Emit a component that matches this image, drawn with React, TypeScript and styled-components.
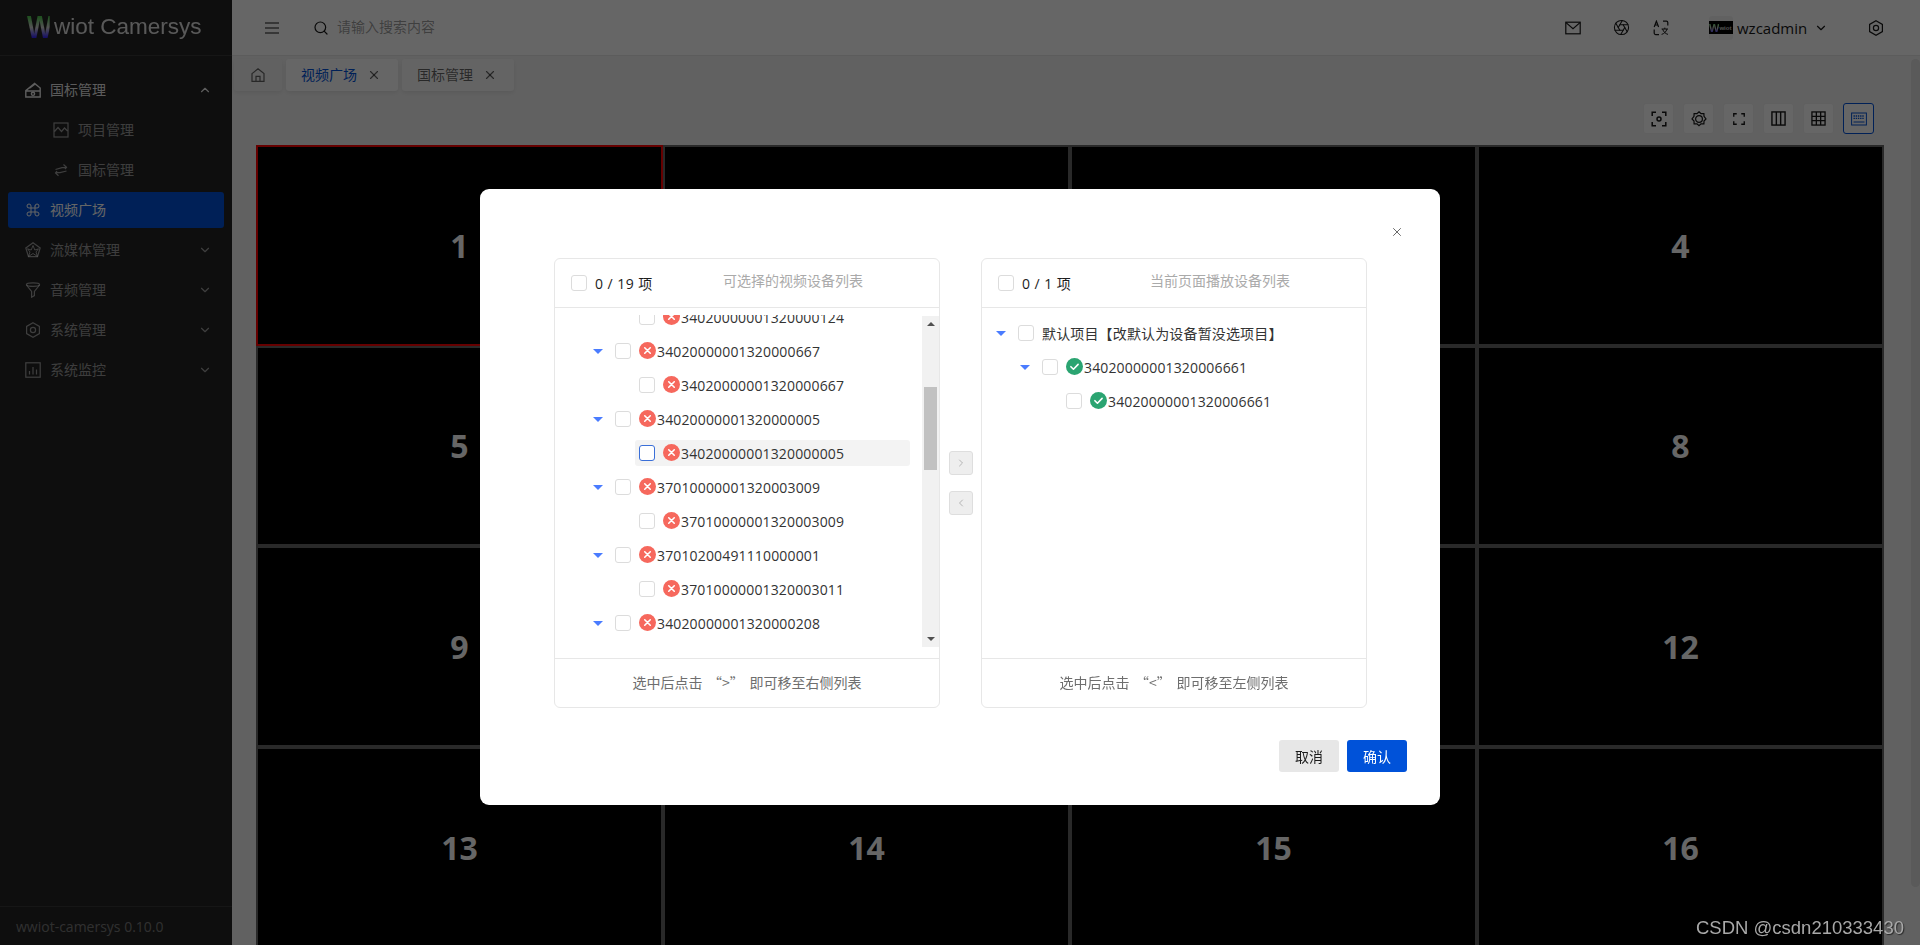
import * as React from "react";
import styled, { createGlobalStyle } from "styled-components";
import { Aperture, ChevronDown, ChevronLeft, ChevronRight, ChevronUp, Command, Search, X } from "lucide-react";

const GlobalStyle = createGlobalStyle`
  html, body {
    margin: 0;
    padding: 0;
    height: 100%;
    overflow: hidden;
    background: #f3f3f3;
  }
  * {
    box-sizing: border-box;
  }
  body {
    font-family: "Open Sans", "Noto Sans CJK SC", sans-serif;
    font-size: 14px;
  }
`;

const Page = styled.div`
  display: flex;
  width: 100vw;
  height: 100vh;
  overflow: hidden;
`;

/* ---------- sidebar ---------- */

const Sidebar = styled.aside`
  flex: 0 0 232px;
  display: flex;
  flex-direction: column;
  background: #242424;
  color: rgba(255, 255, 255, 0.55);
`;

const Logo = styled.div`
  flex: 0 0 56px;
  display: flex;
  align-items: center;
  padding: 0 0 2px 27px;
  border-bottom: 1px solid #383838;
`;

const LogoMark = styled.span`
  display: inline-block;
  flex: 0 0 27px;
  font-family: "Liberation Sans", sans-serif;
  font-weight: 700;
  font-size: 32px;
  line-height: 30px;
  width: 27px;
  transform: scaleX(0.84);
  transform-origin: left center;
  background: linear-gradient(180deg, #45c845 12%, #d0d0d0 52%, #2a18ff 88%);
  -webkit-background-clip: text;
  background-clip: text;
  color: transparent;
`;

const LogoText = styled.span`
  font-family: "Liberation Sans", sans-serif;
  font-size: 22.5px;
  white-space: nowrap;
  color: #fff;
  opacity: 0.85;
`;

const Menu = styled.nav`
  flex: 1;
  display: flex;
  flex-direction: column;
  gap: 4px;
  padding: 16px 8px 0;
`;

const MenuItem = styled.div<{ $active?: boolean; $open?: boolean; $sub?: boolean }>`
  height: 36px;
  display: flex;
  align-items: center;
  gap: 9px;
  padding: 0 12px 0 ${(p) => (p.$sub ? "45px" : "17px")};
  border-radius: 3px;
  background: ${(p) => (p.$active ? "#0052d9" : "transparent")};
  color: ${(p) => (p.$active ? "#fff" : p.$open ? "rgba(255,255,255,.9)" : "rgba(255,255,255,.55)")};
  line-height: 22px;
`;

const MenuLabel = styled.span`
  flex: 1;
`;

const VersionBar = styled.div`
  flex: 0 0 39px;
  display: flex;
  align-items: center;
  padding-left: 16px;
  border-top: 1px solid #383838;
  color: rgba(255, 255, 255, 0.4);
`;

/* ---------- header and tabs ---------- */

const Main = styled.div`
  flex: 1;
  min-width: 0;
  display: flex;
  flex-direction: column;
  position: relative;
`;

const Header = styled.header`
  flex: 0 0 56px;
  display: flex;
  align-items: center;
  padding: 0 24px 0 32px;
  background: #fff;
  border-bottom: 1px solid #e7e7e7;
  color: #181818;
`;

const SearchBox = styled.div`
  flex: 1;
  display: flex;
  align-items: center;
  gap: 8px;
  margin-left: 33px;
  color: rgba(0, 0, 0, 0.4);
  line-height: 20px;
  svg {
    color: #181818;
  }
`;

const SearchText = styled.span`
  margin-top: -2px;
`;

const HeadButton = styled.div<{ $ml?: number }>`
  width: 40px;
  height: 32px;
  display: flex;
  align-items: center;
  justify-content: center;
  margin-left: ${(p) => p.$ml ?? 0}px;
`;

const UserBox = styled.div`
  display: flex;
  align-items: center;
  width: 127px;
  margin: 0 20px 0 28px;
`;

const AvatarFrame = styled.div`
  width: 24px;
  height: 24px;
  display: flex;
  align-items: center;
  border-radius: 3px;
  background: #f3f3f3;
`;

const AvatarImage = styled.div`
  width: 24px;
  height: 13px;
  display: flex;
  align-items: center;
  background: #000;
  color: #ccc;
  font-family: "Liberation Sans", sans-serif;
  font-size: 6px;
  font-weight: 700;
  overflow: hidden;
`;

const AvatarW = styled.span`
  font-size: 11px;
  background: linear-gradient(180deg, #45c845, #d0d0d0 50%, #2a18ff);
  -webkit-background-clip: text;
  background-clip: text;
  color: transparent;
`;

const UserName = styled.span`
  margin: 0 7px 0 4px;
  font-size: 15px;
`;

const TabBar = styled.div`
  flex: 0 0 40px;
  display: flex;
  gap: 4px;
  padding: 3px 0 0 2px;
`;

const Tab = styled.div<{ $active?: boolean; $home?: boolean }>`
  width: ${(p) => (p.$home ? "48px" : "112px")};
  height: 32px;
  display: flex;
  align-items: center;
  justify-content: ${(p) => (p.$home ? "center" : "flex-start")};
  gap: 10px;
  padding-left: ${(p) => (p.$home ? 0 : "15px")};
  padding-bottom: 2px;
  border-radius: 3px;
  background: ${(p) => (p.$active ? "#fff" : p.$home ? "#f3f3f3" : "#fafafa")};
  box-shadow: 0 2px 4px rgba(0, 0, 0, 0.08);
  color: ${(p) => (p.$active ? "#0052d9" : "rgba(0,0,0,.6)")};
  svg {
    color: rgba(0, 0, 0, 0.6);
    margin-top: 2px;
  }
`;

/* ---------- video wall ---------- */

const Content = styled.div`
  flex: 1;
  min-height: 0;
  overflow: hidden;
  padding: 7px 36px 0 24px;
`;

const Toolbar = styled.div`
  display: flex;
  justify-content: flex-end;
  gap: 9px;
  padding-right: 10px;
  margin-bottom: 11px;
`;

const ToolButton = styled.div<{ $active?: boolean }>`
  width: 31px;
  height: 31px;
  display: flex;
  align-items: center;
  justify-content: center;
  border-radius: 3px;
  background: #fff;
  border: 1px solid ${(p) => (p.$active ? "#0052d9" : "#f0f0f0")};
  color: ${(p) => (p.$active ? "#0052d9" : "#181818")};
`;

const VideoGrid = styled.div`
  display: grid;
  grid-template-columns: repeat(4, 407px);
  grid-auto-rows: 200.67px;
`;

const VideoCell = styled.div<{ $selected?: boolean }>`
  display: flex;
  align-items: center;
  justify-content: center;
  background: #000;
  border: 2px solid ${(p) => (p.$selected ? "#ff0000" : "#666")};
  color: #fff;
  font-size: 32px;
  font-weight: 700;
`;

const PageScroll = styled.div`
  position: absolute;
  top: 59px;
  right: 0;
  width: 9px;
  height: 828px;
  border-radius: 5px;
  background: rgba(0, 0, 0, 0.08);
`;

/* ---------- dialog ---------- */

const Mask = styled.div`
  position: fixed;
  inset: 0;
  display: flex;
  justify-content: center;
  align-items: flex-start;
  padding-top: 189px;
  background: rgba(0, 0, 0, 0.6);
`;

const Dialog = styled.div`
  width: 960px;
  height: 616px;
  display: flex;
  flex-direction: column;
  border-radius: 9px;
  background: #fff;
`;

const DialogHead = styled.div`
  flex: 0 0 69px;
  display: flex;
  justify-content: flex-end;
  padding: 36px 36px 0 0;
  color: #555;
`;

const Transfer = styled.div`
  display: flex;
  justify-content: center;
  padding-left: 1px;
`;

const Panel = styled.section`
  width: 386px;
  height: 450px;
  display: flex;
  flex-direction: column;
  border: 1px solid #e7e7e7;
  border-radius: 6px;
`;

const PanelHead = styled.div`
  flex: 0 0 49px;
  position: relative;
  display: flex;
  align-items: center;
  padding-left: 16px;
  border-bottom: 1px solid #e7e7e7;
  color: #1c1c1c;
  letter-spacing: 0.45px;
`;

const PanelTitle = styled.span`
  position: absolute;
  left: 168px;
  top: 11px;
  color: #aaa;
  font-size: 14px;
  letter-spacing: 0;
`;

const PanelBody = styled.div`
  flex: 1;
  min-height: 0;
  display: flex;
  padding: 7px 0 11px;
`;

const PanelFoot = styled.div`
  flex: 0 0 49px;
  display: flex;
  align-items: center;
  justify-content: center;
  padding-bottom: 2px;
  border-top: 1px solid #e7e7e7;
  color: #6e6e6e;
  font-family: "Noto Sans CJK SC", sans-serif;
  word-spacing: 2.5px;
  white-space: pre;
`;

const TreeView = styled.div`
  flex: 1;
  min-width: 0;
  overflow: hidden;
`;

const TreeList = styled.div<{ $offset: number }>`
  margin-top: ${(p) => -p.$offset}px;
`;

const Row = styled.div<{ $level: number }>`
  height: 34px;
  display: flex;
  align-items: center;
  padding: 0 12px 0 ${(p) => 14 + p.$level * 24}px;
`;

const CaretSlot = styled.span`
  flex: 0 0 22px;
  display: flex;
  align-items: center;
`;

const Caret = styled.span`
  width: 0;
  height: 0;
  border-left: 5px solid transparent;
  border-right: 5px solid transparent;
  border-top: 5px solid #4a7cff;
`;

const RowBox = styled.div<{ $hover?: boolean }>`
  flex: 1;
  height: 26px;
  display: flex;
  align-items: center;
  margin-left: -4px;
  padding-left: 4px;
  border-radius: 3px;
  background: ${(p) => (p.$hover ? "#f3f3f3" : "transparent")};
  color: #333;
`;

const Check = styled.span<{ $focus?: boolean }>`
  flex: 0 0 16px;
  height: 16px;
  margin-right: 8px;
  border: 1px solid ${(p) => (p.$focus ? "#3a6fd8" : "#dcdcdc")};
  border-radius: 3px;
  background: #fff;
`;

const Status = styled.svg`
  flex: 0 0 17px;
  width: 17px;
  height: 17px;
  margin: -1px 1px 0 0;
`;

const DeviceId = styled.span`
  letter-spacing: 0.15px;
`;

const ScrollTrack = styled.div`
  flex: 0 0 17px;
  display: flex;
  flex-direction: column;
  align-items: center;
  margin-top: 1px;
  background: #f1f1f1;
`;

const ScrollArrow = styled.span<{ $down?: boolean }>`
  width: 0;
  height: 0;
  margin: 6px 0;
  border-left: 4px solid transparent;
  border-right: 4px solid transparent;
  ${(p) => (p.$down ? "border-top: 4px solid #505050;" : "border-bottom: 4px solid #505050;")}
`;

const ScrollThumb = styled.div`
  width: 13px;
  height: 83px;
  margin: 55px 0 auto;
  background: #c1c1c1;
`;

const MoveColumn = styled.div`
  flex: 0 0 41px;
  display: flex;
  flex-direction: column;
  align-items: center;
  gap: 16px;
  padding: 193px 0 0 0;
`;

const MoveButton = styled.div`
  width: 24px;
  height: 24px;
  display: flex;
  align-items: center;
  justify-content: center;
  border: 1px solid #dedede;
  border-radius: 3px;
  background: #eee;
  color: #b5b5b5;
`;

const DialogFoot = styled.div`
  display: flex;
  justify-content: flex-end;
  gap: 8px;
  padding: 32px 33px 0 0;
`;

const Button = styled.div<{ $primary?: boolean }>`
  width: 60px;
  height: 32px;
  display: flex;
  align-items: center;
  justify-content: center;
  border-radius: 3px;
  background: ${(p) => (p.$primary ? "#0052d9" : "#e7e7e7")};
  color: ${(p) => (p.$primary ? "#fff" : "#1c1c1c")};
`;

const Watermark = styled.div`
  position: fixed;
  right: 16px;
  bottom: 6px;
  font-family: "Liberation Sans", sans-serif;
  font-size: 18.5px;
  color: #a8a8a8;
  text-shadow: 1px 1px 1px rgba(0, 0, 0, 0.6);
`;

/* ---------- drawn icons ---------- */

const Svg = ({ size = 16, children, sw = 1.2 }: { size?: number; sw?: number; children: React.ReactNode }) => (
  <svg width={size} height={size} viewBox="0 0 16 16" fill="none" stroke="currentColor" strokeWidth={sw} style={{ flex: "none" }}>
    {children}
  </svg>
);

const GbIcon = () => (
  <Svg sw={1.4}>
    <path d="M.8 15V8.6L9.6 1.4 15.2 6V15zM.8 9h14.4M4.5 6.2l6-4.4" />
    <circle cx="8" cy="11.8" r="1.6" />
  </Svg>
);
const ChartIcon = () => (
  <Svg>
    <rect x="1" y="1" width="14" height="14" />
    <path d="M1.5 9.5 5 5.5l3.5 4L11.5 6l3 3" />
  </Svg>
);
const SwapIcon = () => (
  <Svg>
    <path d="M2.5 7.5 9 5.6 13 5.6M10.5 2.5 13.5 5.3 12 7M13.5 9 7 10.6H3M5.5 13.8 2.5 11 4 9" />
  </Svg>
);
const StarIcon = () => (
  <Svg>
    <path d="M8 .8 15.2 6 12.5 14.6H3.5L.8 6z" />
    <path d="M8 3.5 9.8 8 13.5 6.8 11 10l1.5 4.5L8 11.5l-4.5 3L5 10 2.5 6.8 6.2 8z" strokeWidth="1" />
  </Svg>
);
const FunnelIcon = () => (
  <Svg>
    <ellipse cx="8" cy="2.6" rx="6.6" ry="1.8" />
    <path d="M1.4 3 6.6 9.5V15.2L9.4 13.6V9.5L14.6 3" />
  </Svg>
);
const HexIcon = ({ size = 16 }: { size?: number }) => (
  <Svg size={size}>
    <path d="M8 .8 14.4 4.4V11.6L8 15.2 1.6 11.6V4.4z" />
    <circle cx="8" cy="8" r="2.6" />
  </Svg>
);
const BarsIcon = () => (
  <Svg>
    <rect x=".8" y=".8" width="14.4" height="14.4" />
    <path d="M4.5 12.5V9M8 12.5V5M11.5 12.5V7.5" />
  </Svg>
);
const HomeIcon = () => (
  <Svg>
    <path d="M2 6.6 8 1.8l6 4.8V14.4H2zM6 14.4V9.4h4v5" />
  </Svg>
);
const MenuIcon = () => (
  <Svg>
    <path d="M1 3h14M1 8h14M1 13h14" />
  </Svg>
);
const MailIcon = () => (
  <Svg>
    <rect x=".8" y="2.2" width="14.4" height="11.6" />
    <path d="M1 2.6 8 8.6l7-6" />
  </Svg>
);
const TranslateIcon = () => (
  <Svg>
    <path d="M1.2 7 3.4 1.2 5.6 7M2 5h2.8M10 1.2h3.4a1.4 1.4 0 0 1 1.4 1.4V5.5M1.2 9.5V13a1.6 1.6 0 0 0 1.6 1.6H6" />
    <path d="M8.6 9h6.4M11.8 7.6V9M9.6 9c.8 2.8 3 4.8 5.4 5.4M14 9c-.8 2.8-3 4.8-5.4 5.4" strokeWidth="1" />
  </Svg>
);
const FocusIcon = () => (
  <Svg sw={1.5}>
    <path d="M1.2 5V1.2H5M11 1.2h3.8V5M14.8 11v3.8H11M5 14.8H1.2V11" />
    <circle cx="8" cy="8" r="2" />
  </Svg>
);
const GearIcon = () => (
  <Svg size={16} sw={1.2}>
    <path d="M8 .8l2 1.9 2.9-.1.1 2.7 2 2.7-2 2.1-.1 2.8-2.9-.1-2 1.9-2-1.9-2.9.1-.1-2.8-2-2.1 2-2.7.1-2.7 2.9.1z" />
    <circle cx="8" cy="8" r="3.4" />
  </Svg>
);
const FullIcon = () => (
  <Svg size={12} sw={1.8}>
    <path d="M1 5V1h4M11 1h4v4M15 11v4h-4M5 15H1v-4" />
  </Svg>
);
const ColumnsIcon = () => (
  <Svg size={15} sw={1.5}>
    <rect x="1" y="1" width="14" height="14" />
    <path d="M5.7 1v14M10.3 1v14" />
  </Svg>
);
const GridIcon = () => (
  <Svg size={15} sw={1.4}>
    <rect x="1" y="1" width="14" height="14" />
    <path d="M5.7 1v14M10.3 1v14M1 5.7h14M1 10.3h14" />
  </Svg>
);
const KeysIcon = () => (
  <Svg size={16} sw={1}>
    <rect x=".6" y="2" width="14.8" height="12" />
    <path d="M2.5 5h11M2.5 7.4h11" strokeDasharray="1.4 .8" strokeWidth="1.4" />
    <path d="M2.5 11h11" />
  </Svg>
);

const ErrorIcon = () => (
  <Status viewBox="0 0 16 16">
    <circle cx="8" cy="8" r="8" fill="#f6685d" />
    <path d="M5.4 5.4l5.2 5.2M10.6 5.4l-5.2 5.2" stroke="#fff" strokeWidth="1.5" strokeLinecap="round" />
  </Status>
);
const OkIcon = () => (
  <Status viewBox="0 0 16 16">
    <circle cx="8" cy="8" r="8" fill="#2ba471" />
    <path d="M4.6 8.2l2.4 2.4 4.4-4.6" stroke="#fff" strokeWidth="1.5" fill="none" strokeLinecap="round" strokeLinejoin="round" />
  </Status>
);

/* ---------- data ---------- */

type Node = { level: number; id: string; branch?: boolean; hover?: boolean; state?: "ok" | "err" | "none" };

const leftNodes: Node[] = [
  { level: 2, id: "34020000001320000124" },
  { level: 1, id: "34020000001320000667", branch: true },
  { level: 2, id: "34020000001320000667" },
  { level: 1, id: "34020000001320000005", branch: true },
  { level: 2, id: "34020000001320000005", hover: true },
  { level: 1, id: "37010000001320003009", branch: true },
  { level: 2, id: "37010000001320003009" },
  { level: 1, id: "37010200491110000001", branch: true },
  { level: 2, id: "37010000001320003011" },
  { level: 1, id: "34020000001320000208", branch: true },
];

const rightNodes: Node[] = [
  { level: 0, id: "默认项目【改默认为设备暂没选项目】", branch: true, state: "none" },
  { level: 1, id: "34020000001320006661", branch: true, state: "ok" },
  { level: 2, id: "34020000001320006661", state: "ok" },
];

const TreeRow = ({ node }: { node: Node }) => (
  <Row $level={node.level}>
    <CaretSlot>{node.branch && <Caret />}</CaretSlot>
    <RowBox $hover={node.hover}>
      <Check $focus={node.hover} />
      {node.state === "ok" && <OkIcon />}
      {(!node.state || node.state === "err") && <ErrorIcon />}
      <DeviceId>{node.id}</DeviceId>
    </RowBox>
  </Row>
);

const menu = [
  { label: "流媒体管理", icon: <StarIcon /> },
  { label: "音频管理", icon: <FunnelIcon /> },
  { label: "系统管理", icon: <HexIcon /> },
  { label: "系统监控", icon: <BarsIcon /> },
];

export default function App() {
  return (
    <Page>
      <GlobalStyle />
      <Sidebar>
        <Logo>
          <LogoMark>W</LogoMark>
          <LogoText>wiot Camersys</LogoText>
        </Logo>
        <Menu>
          <MenuItem $open>
            <GbIcon />
            <MenuLabel>国标管理</MenuLabel>
            <ChevronUp size={14} />
          </MenuItem>
          <MenuItem $sub>
            <ChartIcon />
            <MenuLabel>项目管理</MenuLabel>
          </MenuItem>
          <MenuItem $sub>
            <SwapIcon />
            <MenuLabel>国标管理</MenuLabel>
          </MenuItem>
          <MenuItem $active>
            <Command size={16} strokeWidth={1.5} />
            <MenuLabel>视频广场</MenuLabel>
          </MenuItem>
          {menu.map((m) => (
            <MenuItem key={m.label}>
              {m.icon}
              <MenuLabel>{m.label}</MenuLabel>
              <ChevronDown size={14} />
            </MenuItem>
          ))}
        </Menu>
        <VersionBar>wwiot-camersys 0.10.0</VersionBar>
      </Sidebar>

      <Main>
        <Header>
          <MenuIcon />
          <SearchBox>
            <Search size={16} strokeWidth={1.8} />
            <SearchText>请输入搜索内容</SearchText>
          </SearchBox>
          <HeadButton>
            <MailIcon />
          </HeadButton>
          <HeadButton $ml={8}>
            <Aperture size={17} strokeWidth={1.5} />
          </HeadButton>
          <HeadButton>
            <TranslateIcon />
          </HeadButton>
          <UserBox>
            <AvatarFrame>
              <AvatarImage>
                <AvatarW>W</AvatarW>wiot
              </AvatarImage>
            </AvatarFrame>
            <UserName>wzcadmin</UserName>
            <ChevronDown size={14} />
          </UserBox>
          <HeadButton>
            <HexIcon />
          </HeadButton>
        </Header>

        <TabBar>
          <Tab $home>
            <HomeIcon />
          </Tab>
          <Tab $active>
            视频广场 <X size={14} />
          </Tab>
          <Tab>
            国标管理 <X size={14} />
          </Tab>
        </TabBar>

        <Content>
          <Toolbar>
            <ToolButton><FocusIcon /></ToolButton>
            <ToolButton><GearIcon /></ToolButton>
            <ToolButton><FullIcon /></ToolButton>
            <ToolButton><ColumnsIcon /></ToolButton>
            <ToolButton><GridIcon /></ToolButton>
            <ToolButton $active><KeysIcon /></ToolButton>
          </Toolbar>
          <VideoGrid>
            {Array.from({ length: 16 }, (_, i) => (
              <VideoCell key={i} $selected={i === 0}>
                {i + 1}
              </VideoCell>
            ))}
          </VideoGrid>
        </Content>
        <PageScroll />
      </Main>

      <Mask>
        <Dialog>
          <DialogHead>
            <X size={14} strokeWidth={1.5} />
          </DialogHead>
          <Transfer>
            <Panel>
              <PanelHead>
                <Check />
                0 / 19 项
                <PanelTitle>可选择的视频设备列表</PanelTitle>
              </PanelHead>
              <PanelBody>
                <TreeView>
                  <TreeList $offset={15}>
                    {leftNodes.map((n, i) => (
                      <TreeRow key={i} node={n} />
                    ))}
                  </TreeList>
                </TreeView>
                <ScrollTrack>
                  <ScrollArrow />
                  <ScrollThumb />
                  <ScrollArrow $down />
                </ScrollTrack>
              </PanelBody>
              <PanelFoot>选中后点击 “&gt;” 即可移至右侧列表</PanelFoot>
            </Panel>
            <MoveColumn>
              <MoveButton>
                <ChevronRight size={12} />
              </MoveButton>
              <MoveButton>
                <ChevronLeft size={12} />
              </MoveButton>
            </MoveColumn>
            <Panel>
              <PanelHead>
                <Check />
                0 / 1 项
                <PanelTitle>当前页面播放设备列表</PanelTitle>
              </PanelHead>
              <PanelBody>
                <TreeView>
                  <TreeList $offset={-1}>
                    {rightNodes.map((n, i) => (
                      <TreeRow key={i} node={n} />
                    ))}
                  </TreeList>
                </TreeView>
              </PanelBody>
              <PanelFoot>选中后点击 “&lt;” 即可移至左侧列表</PanelFoot>
            </Panel>
          </Transfer>
          <DialogFoot>
            <Button>取消</Button>
            <Button $primary>确认</Button>
          </DialogFoot>
        </Dialog>
      </Mask>
      <Watermark>CSDN @csdn210333430</Watermark>
    </Page>
  );
}
